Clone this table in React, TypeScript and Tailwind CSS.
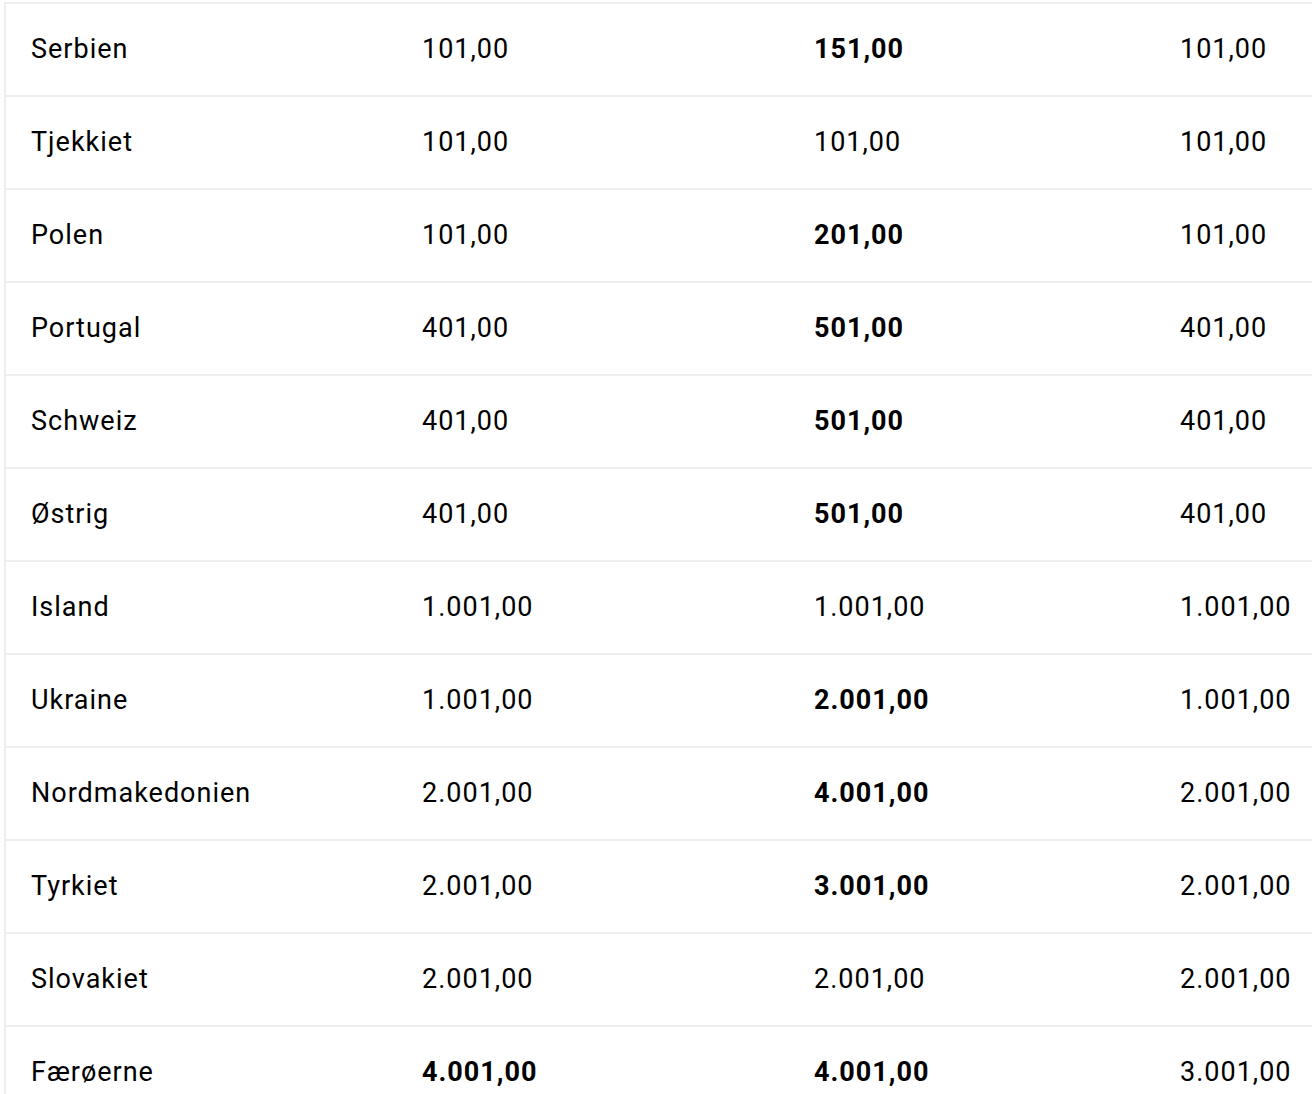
const rows: { country: string; a: string; b: string; c: string; boldA?: boolean; boldB?: boolean }[] = [
  { country: 'Serbien', a: '101,00', b: '151,00', c: '101,00', boldB: true },
  { country: 'Tjekkiet', a: '101,00', b: '101,00', c: '101,00' },
  { country: 'Polen', a: '101,00', b: '201,00', c: '101,00', boldB: true },
  { country: 'Portugal', a: '401,00', b: '501,00', c: '401,00', boldB: true },
  { country: 'Schweiz', a: '401,00', b: '501,00', c: '401,00', boldB: true },
  { country: 'Østrig', a: '401,00', b: '501,00', c: '401,00', boldB: true },
  { country: 'Island', a: '1.001,00', b: '1.001,00', c: '1.001,00' },
  { country: 'Ukraine', a: '1.001,00', b: '2.001,00', c: '1.001,00', boldB: true },
  { country: 'Nordmakedonien', a: '2.001,00', b: '4.001,00', c: '2.001,00', boldB: true },
  { country: 'Tyrkiet', a: '2.001,00', b: '3.001,00', c: '2.001,00', boldB: true },
  { country: 'Slovakiet', a: '2.001,00', b: '2.001,00', c: '2.001,00' },
  { country: 'Færøerne', a: '4.001,00', b: '4.001,00', c: '3.001,00', boldA: true, boldB: true },
];

export default function App() {
  return (
    <div className="w-[1312px] h-[1094px] overflow-hidden bg-white pt-[2px]" style={{ fontFamily: 'Roboto, sans-serif' }}>
      <div className="ml-[4px] border-l-2 border-t-2 border-[#eeeeee] text-[27px] tracking-[1px] text-black">
        {rows.map((r) => (
          <div
            key={r.country}
            className="grid grid-cols-[391px_392px_366px_1fr] items-center h-[93px] border-b-2 border-[#eeeeee] pl-[25px]"
          >
            <span>{r.country}</span>
            <span className={r.boldA ? 'font-bold' : ''}>{r.a}</span>
            <span className={r.boldB ? 'font-bold' : ''}>{r.b}</span>
            <span>{r.c}</span>
          </div>
        ))}
      </div>
    </div>
  );
}
